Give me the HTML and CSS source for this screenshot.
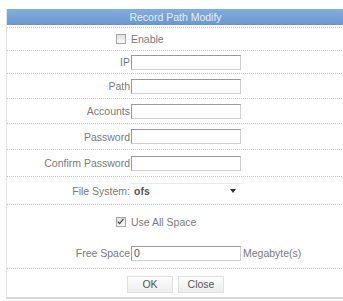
FILE: index.html
```html
<!DOCTYPE html>
<html>
<head>
<meta charset="utf-8">
<link rel="stylesheet" href="styles.css">
</head>
<body>
<div class="panel">
  <div class="title-wrap"><div class="title">Record Path Modify</div></div>
  <div class="row h22"><span class="lbl"><span class="cb"></span></span><span class="txt">Enable</span></div>
  <div class="row h22"><span class="lbl">IP</span><span class="inp"></span></div>
  <div class="row h24"><span class="lbl">Path</span><span class="inp"></span></div>
  <div class="row h24"><span class="lbl">Accounts</span><span class="inp"></span></div>
  <div class="row h25"><span class="lbl">Password</span><span class="inp"></span></div>
  <div class="row h26"><span class="lbl">Confirm Password</span><span class="inp"></span></div>
  <div class="row h27"><span class="lbl">File System:</span><span class="sel"><span class="val">ofs</span><span class="arrow"></span></span></div>
  <div class="row plain h33"><span class="lbl"><span class="cb checked"><svg width="9" height="9" viewBox="0 0 9 9"><path d="M1.8 4.6 L3.6 6.6 L7.4 1.8" fill="none" stroke="#444" stroke-width="1.2"/></svg></span></span><span class="txt">Use All Space</span></div>
  <div class="row h30"><span class="lbl">Free Space</span><span class="inp"><span class="zero">0</span></span><span class="unit">Megabyte(s)</span></div>
  <div class="btns"><span class="btn">OK</span><span class="btn">Close</span></div>
</div>
</body>
</html>
```
FILE: styles.css
```css
html, body {
  margin: 0;
  padding: 0;
  background: #fff;
  overflow: hidden;
}
body {
  font-family: "Liberation Sans", Arial, sans-serif;
  font-size: 10.5px;
  color: #7a7a7a;
}
.panel {
  margin: 9px 0 0 6px;
  width: 337px;
  border-left: 1px solid #e4e4e4;
  border-bottom: 2px solid #dadada;
}
.title-wrap {
  padding-bottom: 2px;
  border-bottom: 1px dotted #c4c4c4;
}
.title {
  height: 16px;
  line-height: 16px;
  text-align: center;
  color: #e6eef8;
  background: linear-gradient(#82aedd, #6a98cf);
}
.row {
  display: grid;
  grid-template-columns: 124px 110px auto;
  align-items: center;
  border-bottom: 1px dotted #c4c4c4;
}
.row.plain { border-bottom: none; }
.h22 { height: 22px; }
.h24 { height: 24px; }
.h25 { height: 25px; }
.h26 { height: 26px; }
.h27 { height: 27px; }
.h30 { height: 30px; }
.h33 { height: 33px; }
.lbl {
  padding-right: 1px;
  display: flex;
  justify-content: flex-end;
  align-items: center;
  white-space: nowrap;
}
.cb {
  width: 8px;
  height: 8px;
  border: 1px solid #a5a5a5;
  background: linear-gradient(#e2e2e2, #f8f8f8);
  margin-right: 4px;
  display: inline-flex;
}
.cb svg { display: block; margin: -1px 0 0 -1px; }
.inp {
  height: 13px;
  border: 1px solid #999;
  border-right-color: #cfcfcf;
  border-bottom-color: #cfcfcf;
  background: #fff;
  display: flex;
  align-items: center;
}
.zero {
  color: #555;
  padding-left: 2px;
}
.unit {
  padding-left: 2px;
  white-space: nowrap;
}
.sel {
  height: 15px;
  border-top: 1px solid #eaeaea;
  display: flex;
  align-items: center;
  justify-content: space-between;
  padding: 0 5px 0 3px;
}
.val {
  color: #555;
  font-weight: bold;
}
.arrow {
  width: 0;
  height: 0;
  border-left: 3px solid transparent;
  border-right: 3px solid transparent;
  border-top: 4px solid #333;
}
.btns {
  display: flex;
  justify-content: center;
  gap: 5px;
  padding: 7px 0 4px;
}
.btn {
  width: 44px;
  height: 15px;
  line-height: 15px;
  text-align: center;
  color: #555;
  border: 1px solid #e0e0e0;
  background: linear-gradient(#fdfdfd, #ededed);
}
```
